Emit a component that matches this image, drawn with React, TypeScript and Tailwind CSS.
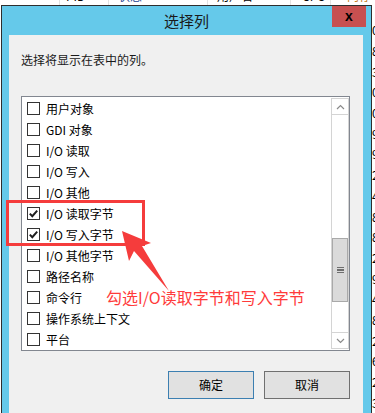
import React from "react";

const items: { label: string; checked: boolean }[] = [
  { label: "用户对象", checked: false },
  { label: "GDI 对象", checked: false },
  { label: "I/O 读取", checked: false },
  { label: "I/O 写入", checked: false },
  { label: "I/O 其他", checked: false },
  { label: "I/O 读取字节", checked: true },
  { label: "I/O 写入字节", checked: true },
  { label: "I/O 其他字节", checked: false },
  { label: "路径名称", checked: false },
  { label: "命令行", checked: false },
  { label: "操作系统上下文", checked: false },
  { label: "平台", checked: false },
];

const digits = ["0", "8", "3", "0", "0", "9", "9", "2", "4", "8", "8", "2", "9", "4", "8", "2", "6", "2", "3", "5"];

const font = {
  fontFamily: '"Noto Sans CJK SC", "Noto Sans", sans-serif',
};

function Checkbox({ checked }: { checked: boolean }) {
  return (
    <div className="w-[13px] h-[13px] border border-[#333333] bg-white flex items-center justify-center shrink-0">
      {checked && (
        <svg width="11" height="11" viewBox="0 0 11 11">
          <path d="M1.8 5.6 L4.3 8.2 L9.2 2.6" stroke="#1e1e1e" strokeWidth="2" fill="none" />
        </svg>
      )}
    </div>
  );
}

export default function App() {
  return (
    <div className="relative w-[375px] h-[413px] overflow-hidden bg-white text-black" style={font}>
      {/* background window (task manager table) */}
      <div className="flex flex-col">
        <div className="h-[5px] overflow-hidden flex text-[12px] leading-[16px]">
          <div className="w-[60px] border-r border-[#e3e3e3] shrink-0" />
          <div className="w-[49px] border-r border-[#e3e3e3] shrink-0 pl-[6px] -mt-[12px]">PID</div>
          <div className="w-[99px] border-r border-[#e3e3e3] shrink-0 pl-[9px] -mt-[12px] text-[#1a3f8f]">状态</div>
          <div className="w-[83px] border-r border-[#e3e3e3] shrink-0 pl-[9px] -mt-[12px]">用户名</div>
          <div className="w-[40px] border-r border-[#e3e3e3] shrink-0 pl-[11px] -mt-[12px]">CPU</div>
          <div className="flex-1 pl-[16px] -mt-[12px] text-[#c47a1a]">内存</div>
        </div>
        <div className="pt-[15px] flex flex-col">
          {digits.map((d, i) => (
            <div key={i} className="h-[20.7px] flex items-center text-[12px] leading-[16px]">
              <span className="ml-[372px]">{d}</span>
            </div>
          ))}
        </div>
      </div>

      {/* dialog */}
      <div className="absolute left-[1px] top-[5px] w-[371px] h-[430px] border border-[#2e2e2e] bg-[#65c9ea] flex flex-col">
        <div className="relative h-[29px] shrink-0 flex items-center justify-center">
          <span className="text-[15px] text-[#1a1a1a] leading-none -mt-[1px]">选择列</span>
          <div className="absolute right-[5px] top-0 w-[34px] h-[21px] bg-[#c75050] flex items-center justify-center">
            <span className="text-[14px] font-bold leading-none -mt-[2px]" style={{ fontFamily: '"Liberation Sans", Arial, sans-serif' }}>
              x
            </span>
          </div>
        </div>
        <div className="ml-[7px] mr-[8px] flex-1 bg-[#f0f0f0] flex flex-col">
          <div className="pl-[12px] pt-[17px] text-[12px] leading-[16px] text-[#1a1a1a]">选择将显示在表中的列。</div>
          <div className="ml-[12px] mt-[28px] w-[329px] h-[255px] border border-[#828790] bg-white flex">
            <div className="flex-1 pt-[1px] flex flex-col overflow-hidden">
              {items.map((it, i) => (
                <div key={i} className="h-[21px] shrink-0 flex items-center pl-[5px]">
                  <Checkbox checked={it.checked} />
                  <span className="ml-[6px] text-[12px] leading-[16px] text-black">{it.label}</span>
                </div>
              ))}
            </div>
            <div className="w-[18px] my-[1px] border border-[#d4d4d4] flex flex-col bg-white">
              <div className="h-[16px] border-b border-[#d4d4d4] flex items-center justify-center">
                <svg width="9" height="6" viewBox="0 0 9 6">
                  <path d="M1 5 L4.5 1.5 L8 5" stroke="#8a8a8a" strokeWidth="1.2" fill="none" />
                </svg>
              </div>
              <div className="h-[123px]" />
              <div className="h-[64px] bg-[#dadada] border border-[#a9a9a9] flex flex-col items-center justify-center gap-[1px]">
                <div className="w-[7px] h-[1.5px] bg-[#6e6e6e]" />
                <div className="w-[7px] h-[1.5px] bg-[#6e6e6e]" />
                <div className="w-[7px] h-[1.5px] bg-[#6e6e6e]" />
              </div>
              <div className="flex-1" />
              <div className="h-[16px] border-t border-[#d4d4d4] flex items-center justify-center">
                <svg width="9" height="6" viewBox="0 0 9 6">
                  <path d="M1 1 L4.5 4.5 L8 1" stroke="#8a8a8a" strokeWidth="1.2" fill="none" />
                </svg>
              </div>
            </div>
          </div>
          <div className="mt-[20px] pl-[159px] flex gap-[10px]">
            <button className="w-[86px] h-[28px] bg-[#e1e1e1] border border-[#3c7fb1] text-[12px] text-black flex items-center justify-center">
              确定
            </button>
            <button className="w-[86px] h-[28px] bg-[#e1e1e1] border border-[#707070] text-[12px] text-black flex items-center justify-center">
              取消
            </button>
          </div>
        </div>
      </div>

      {/* annotation overlay */}
      <div className="absolute left-[6px] top-[200px] w-[139px] h-[46px] border-[3px] border-[#f53c3c]" />
      <svg className="absolute left-0 top-0" width="375" height="413" viewBox="0 0 375 413">
        <polygon
          points="122,231 151,243 142,246 169,291 134,251 129,261"
          fill="#f53c3c"
        />
      </svg>
      <div className="absolute left-[106px] top-[286px] text-[16px] leading-[22px] text-[#ff3b3b] whitespace-nowrap">
        勾选I/O读取字节和写入字节
      </div>
    </div>
  );
}
